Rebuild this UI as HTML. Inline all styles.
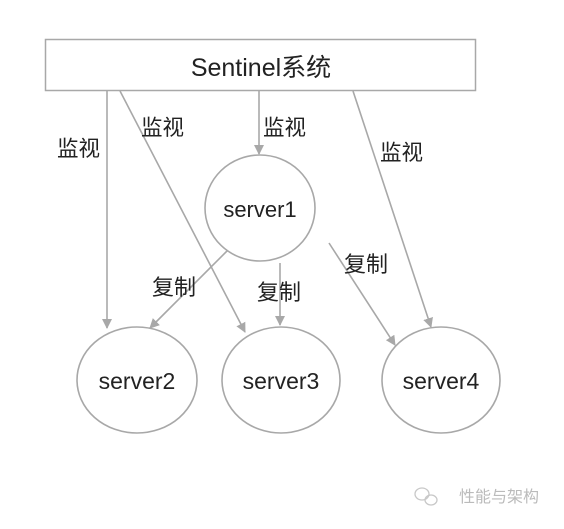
<!DOCTYPE html>
<html><head><meta charset="utf-8"><style>
body{margin:0;background:#fff;}
svg text{font-family:"Liberation Sans","Noto Sans CJK SC",sans-serif;fill:#222;}
</style></head><body>
<svg width="564" height="524" viewBox="0 0 564 524" xmlns="http://www.w3.org/2000/svg">
<defs><marker id="a" markerWidth="10" markerHeight="10" refX="9" refY="5" orient="auto" markerUnits="userSpaceOnUse"><path d="M0,0 L10,5 L0,10 Z" fill="#a8a8a8"/></marker></defs>
<rect x="45.5" y="39.5" width="430" height="51" fill="#fff" stroke="#a8a8a8" stroke-width="1.5"/>
<text x="261" y="76" font-size="25" text-anchor="middle">Sentinel系统</text>
<g stroke="#a8a8a8" stroke-width="1.6" fill="none">
<line x1="107" y1="91" x2="107" y2="328" marker-end="url(#a)"/>
<line x1="120" y1="91" x2="245" y2="332" marker-end="url(#a)"/>
<line x1="259" y1="91" x2="259" y2="154" marker-end="url(#a)"/>
<line x1="353" y1="91" x2="431" y2="327" marker-end="url(#a)"/>
<line x1="235" y1="243" x2="150" y2="328" marker-end="url(#a)"/>
<line x1="280" y1="263" x2="280" y2="325" marker-end="url(#a)"/>
<line x1="329" y1="243" x2="395" y2="345" marker-end="url(#a)"/>
<ellipse cx="260" cy="208" rx="55" ry="53" fill="#fff"/>
<ellipse cx="137" cy="380" rx="60" ry="53" fill="#fff"/>
<ellipse cx="281" cy="380" rx="59" ry="53" fill="#fff"/>
<ellipse cx="441" cy="380" rx="59" ry="53" fill="#fff"/>
</g>
<text x="260" y="217" font-size="22" text-anchor="middle">server1</text>
<text x="137" y="389" font-size="23" text-anchor="middle">server2</text>
<text x="281" y="389" font-size="23" text-anchor="middle">server3</text>
<text x="441" y="389" font-size="23" text-anchor="middle">server4</text>
<text x="57" y="156" font-size="21.5">监视</text>
<text x="141" y="135" font-size="21.5">监视</text>
<text x="263" y="135" font-size="21.5">监视</text>
<text x="380" y="160" font-size="21.5">监视</text>
<text x="152" y="295" font-size="22">复制</text>
<text x="257" y="300" font-size="22">复制</text>
<text x="344" y="272" font-size="22">复制</text>
<g fill="none" stroke="#c8c8c8" stroke-width="1.3"><ellipse cx="422" cy="494" rx="7" ry="6"/><ellipse cx="431" cy="500" rx="6" ry="5"/></g>
<text x="459" y="502" font-size="16" style="fill:#bbb">性能与架构</text>
</svg>
</body></html>
